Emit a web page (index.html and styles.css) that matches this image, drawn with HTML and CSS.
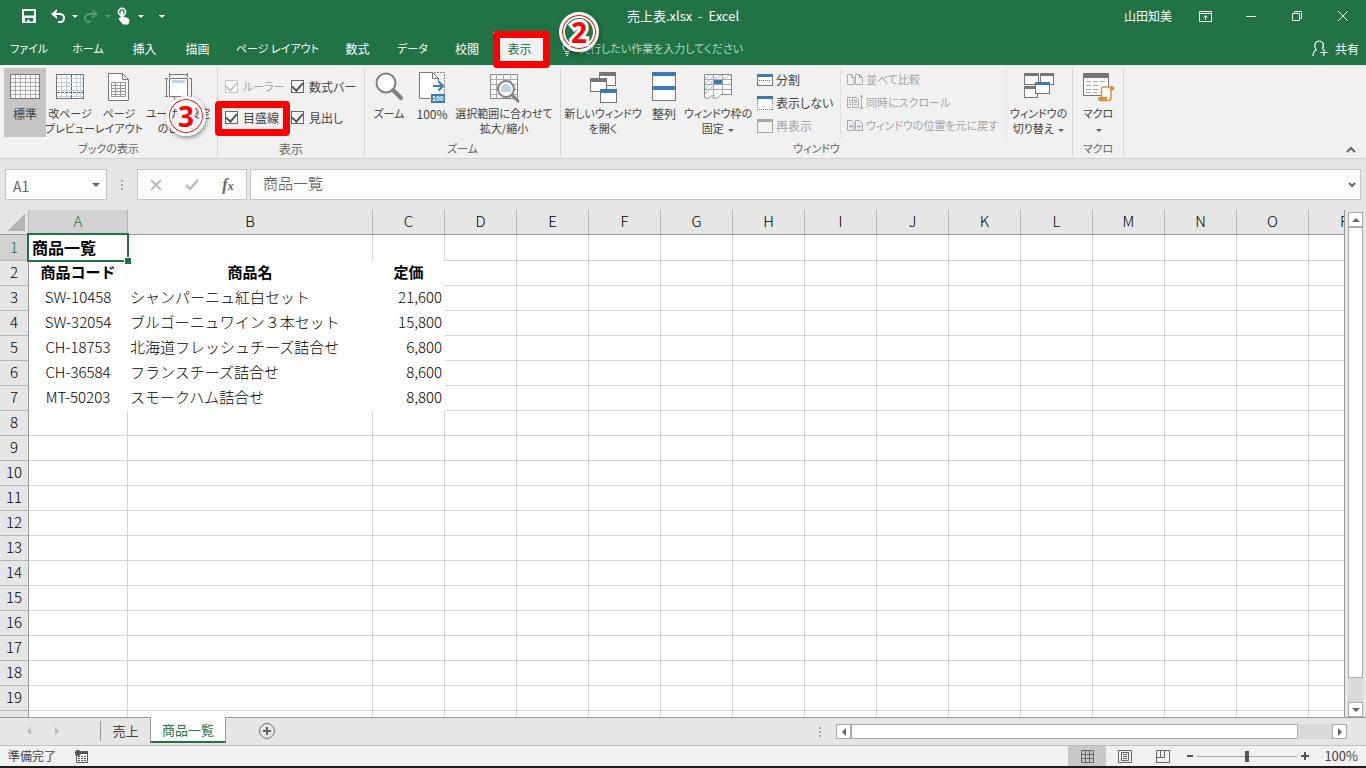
FILE: index.html
```html
<!DOCTYPE html>
<html lang="ja">

<head>
    <meta charset="UTF-8">
    <meta name="viewport" content="width=device-width, initial-scale=1.0">
    <title>売上表.xlsx - Excel</title>
    <link rel="stylesheet" href="styles.css">
</head>

<body>
    <header class="titlebar">
        <div class="quick">
            <button class="q-save" aria-label="上書き保存">
                <svg width="16" height="16" viewBox="0 0 16 16"><path d="M1 1h14v14H1z M3 3v4.500h10V3z M4 10v3.500h2.500v-2h2v2H12V10z" fill="#fff" fill-rule="evenodd" /></svg>
            </button>
            <button class="q-icon" aria-label="元に戻す">
                <svg width="16" height="16" viewBox="0 0 16 16"><path d="M1 6l6-5v3l-2 1h4c4 0 6 2 6 5s-2 5-5 5H8v-2h2c2 0 3-1 3-3s-1-3-4-3H5l2 1v3z" fill="#fff" /></svg>
            </button>
            <button class="q-caret" aria-label="元に戻すの一覧"><span class="caret"></span></button>
            <button class="q-icon dim" aria-label="やり直し">
                <svg width="16" height="16" viewBox="0 0 16 16"><path d="M15 6L9 1v3l2 1H7c-4 0-6 2-6 5s2 5 5 5h2v-2H6c-2 0-3-1-3-3s1-3 4-3h4L9 8v3z" fill="#fff" /></svg>
            </button>
            <button class="q-caret dim" aria-label="やり直しの一覧"><span class="caret"></span></button>
            <button class="q-icon" aria-label="タッチ/マウス モードの切り替え">
                <svg width="16" height="18" viewBox="0 0 16 18"><circle cx="6" cy="5" r="3.6" fill="none" stroke="#fff" stroke-width="1.6" /><path d="M5 4.500q1-1.500 2 0V10l5 1.500q1 .5 1 1.500l-1 4H7l-4-5q0-1.500 2-.5z" fill="#fff" stroke="#fff" /></svg>
            </button>
            <button class="q-caret" aria-label="モードの一覧"><span class="caret"></span></button>
            <button class="q-more" aria-label="クイック アクセス ツール バーのユーザー設定"><span class="caret lined"></span></button>
        </div>
        <div class="doc-title">売上表.xlsx&nbsp; -&nbsp; Excel</div>
        <div class="window-area">
            <span class="user">山田知美</span>
            <button aria-label="リボンの表示オプション">
                <svg width="13" height="11" viewBox="0 0 13 11"><path d="M.5 .5h12v10H.5z M.5 2.500h12 M6.500 9V4.500 M4.500 6.500l2-2 2 2" fill="none" stroke="#fff" /></svg>
            </button>
            <button aria-label="最小化">
                <svg width="10" height="10" viewBox="0 0 10 10"><path d="M0 5.500h10" stroke="#fff" /></svg>
            </button>
            <button aria-label="元のサイズに戻す">
                <svg width="10" height="10" viewBox="0 0 10 10"><path d="M.5 2.500h7v7h-7z M2.500 2.500v-2h7v7h-2" fill="none" stroke="#fff" /></svg>
            </button>
            <button aria-label="閉じる">
                <svg width="10" height="10" viewBox="0 0 10 10"><path d="M0 0l10 10M10 0L0 10" stroke="#fff" /></svg>
            </button>
        </div>
    </header>

    <nav class="tabs">
        <div class="tab-list">
            <button class="kana">ファイル</button>
            <button class="kana">ホーム</button>
            <button>挿入</button>
            <button>描画</button>
            <button class="kana">ページ レイアウト</button>
            <button>数式</button>
            <button class="kana">データ</button>
            <button>校閲</button>
            <button class="active">表示<span class="mark"></span></button>
        </div>
        <div class="tell-me">
            <svg width="10" height="14" viewBox="0 0 10 14"><path d="M3 9.500C3 8 1 7 1 4.500a4 4 0 0 1 8 0C9 7 7 8 7 9.500z M3 11.500h4M4 13.500h2" fill="none" stroke="#fff" /></svg>
            <input type="text" aria-label="操作アシスト" placeholder="実行したい作業を入力してください">
            <span class="step step-2">2</span>
        </div>
        <button class="share">
            <svg width="16" height="17" viewBox="0 0 16 17"><path d="M4 9.500C1.500 6 3 1 7 1s6 4.500 3 8 M1 16c0-4 1.500-5.500 4-6.500 M12 9v7M8.500 12.500h7" fill="none" stroke="#fff" stroke-width="1.200" /></svg>
            共有
        </button>
    </nav>

    <section class="ribbon">
        <div class="group g-views">
            <div class="group-body">
                <button class="big kanji active">
                    <svg viewBox="0 0 32 32" shape-rendering="crispEdges"><path d="M1 2h30v25H1z" fill="#fff" /><path d="M2 6.500h28M2 10.500h28M2 14.500h28M2 18.500h28M2 22.500h28M6.500 3v23M11.500 3v23M16.500 3v23M21.500 3v23M26.500 3v23" stroke="#b0b0b0" /><path d="M1.500 2.500h29v24h-29z" fill="none" stroke="#777" /></svg>
                    <span>標準</span>
                </button>
                <button class="big">
                    <svg viewBox="0 0 32 32" shape-rendering="crispEdges"><path d="M2 2h28v25H2z" fill="#fff" /><path d="M3 6.500h26M3 10.500h26M3 14.500h26M3 18.500h26M3 24.500h26M7.500 3v23M12.500 3v23M22.500 3v23M26.500 3v23" stroke="#bcd3ea" /><path d="M3 20.500h26M17.500 3v23" stroke="#666" stroke-dasharray="3 1" /><path d="M2.500 2.500h27v24h-27z" fill="none" stroke="#777" /></svg>
                    <span>改ページ<br>プレビュー</span>
                </button>
                <button class="big">
                    <svg viewBox="0 0 32 32"><path d="M5.500 1.500h14l6 6v21h-20z" fill="#fff" stroke="#777" /><path d="M19.500 1.500v6h6" fill="none" stroke="#777" /><path d="M8.500 10.500h14v14h-14z M8.500 13.500h14M8.500 16.500h14M8.500 19.500h14M8.500 22.500h14M12.500 10v15M17.500 10v15" fill="none" stroke="#999" /></svg>
                    <span>ページ<br>レイアウト</span>
                </button>
                <button class="big">
                    <svg viewBox="0 0 32 32" shape-rendering="crispEdges"><path d="M7.500 6.500h18v18h-18z" fill="#fff" stroke="#777" /><path d="M10 8h13v3H10z" fill="#bcd3ea" /><path d="M8 2.500h18M7.500 1v4M25.500 1v4M4.500 6v18M3 6.500h3M3 24.500h3M27 6.500h2.500v18H27M12.500 25v3M18.500 25v3" fill="none" stroke="#777" /></svg>
                    <span>ユーザー設定<br>のビュー</span>
                </button>
            </div>
            <div class="group-name">ブックの表示</div>
            <span class="step step-3">3</span>
        </div>

        <div class="group g-show">
            <div class="group-body checks">
                <label class="disabled"><input type="checkbox" checked disabled>ルーラー</label>
                <label><input type="checkbox" checked>数式バー</label>
                <label><input type="checkbox" checked>目盛線<span class="mark"></span></label>
                <label><input type="checkbox" checked>見出し</label>
            </div>
            <div class="group-name kanji">表示</div>
        </div>

        <div class="group g-zoom">
            <div class="group-body">
                <button class="big">
                    <svg viewBox="0 0 32 32"><circle cx="13" cy="11" r="9.500" fill="#fff" stroke="#808080" stroke-width="2" /><path d="M20 18l8 8" stroke="#808080" stroke-width="4" stroke-linecap="round" /></svg>
                    <span>ズーム</span>
                </button>
                <button class="big kanji">
                    <svg viewBox="0 0 32 32"><path d="M3.500 .5h13l6 6v20h-19z" fill="#fff" /><path d="M14 26.500H3.500V.5h13l6 6v3M16.500 .5v6h6" fill="none" stroke="#777" /><path d="M18 .5h10.500v21" fill="none" stroke="#888" stroke-dasharray="2 1" /><path d="M17 14h10M22.500 9.500l4.500 4.500-4.500 4.500" fill="none" stroke="#3e79b6" stroke-width="2" /><path d="M15 22h14v9H15z" fill="#3e79b6" /><text class="icon-100" x="16" y="29">100</text></svg>
                    <span>100%</span>
                </button>
                <button class="big">
                    <svg viewBox="0 0 32 32"><path d="M2.500 2.500h27v24h-27z" fill="#fff" stroke="#888" /><path d="M2 7.500h27M2 12.500h27M2 17.500h27M2 22.500h27M8.500 2v24M15.500 2v24M22.500 2v24" stroke="#aaa" /><circle cx="18" cy="17" r="8" fill="#fff" stroke="#808080" stroke-width="2" /><path d="M13 20v-4q2-4 5-4t5 4v4z" fill="#bcd3ea" /><path d="M24 23l6 6" stroke="#808080" stroke-width="3" stroke-linecap="round" /></svg>
                    <span>選択範囲に合わせて<br>拡大/縮小</span>
                </button>
            </div>
            <div class="group-name">ズーム</div>
        </div>

        <div class="group g-window">
            <div class="group-body">
                <button class="big">
                    <svg viewBox="0 0 32 32" shape-rendering="crispEdges"><path d="M12.500 .5h16v13h-16z" fill="#fff" stroke="#777" /><path d="M12 0h17v4H12z" fill="#777" /><path d="M3.500 6.500h16v13h-16z" fill="#fff" stroke="#777" /><path d="M3 6h17v4H3z" fill="#777" /><path d="M13.500 17.500h16v13h-16z" fill="#fff" stroke="#777" /><path d="M13 17h17v4H13z" fill="#3e79b6" /></svg>
                    <span>新しいウィンドウ<br>を開く</span>
                </button>
                <button class="big kanji">
                    <svg viewBox="0 0 32 32" shape-rendering="crispEdges"><path d="M4.500 .5h23v28h-23z" fill="#fff" stroke="#777" /><path d="M4 0h24v4H4zM4 14h24v4H4z" fill="#3e79b6" /></svg>
                    <span>整列</span>
                </button>
                <button class="big">
                    <svg viewBox="0 0 32 32"><path d="M2.500 2.500h27v20h-27z" fill="#fff" stroke="#888" /><path d="M3 7.500h26M3 12.500h26M3 17.500h26M11.500 3v19M20.500 3v19" stroke="#aaa" /><path d="M3 7l5-4M3 12l9-9M12 7l8-4M3 17l9-9M21 7l8-4M3 22l8-8" stroke="#9dbfe2" /><path d="M12 8h8v4h-8z" fill="#3e79b6" /><path d="M2.500 22v4h5l3-3h2l-2 3h5l4-4" fill="#fff" stroke="#999" /></svg>
                    <span>ウィンドウ枠の<br>固定 <i class="caret"></i></span>
                </button>
                <div class="small-list">
                    <button>
                        <svg width="16" height="14" viewBox="0 0 16 14" shape-rendering="crispEdges"><path d="M.5 1.500h15v11H.5z" fill="#fff" stroke="#777" /><path d="M0 1h16v3H0z" fill="#3e79b6" /><path d="M2 7.500h12" stroke="#3e79b6" stroke-dasharray="1 1" /></svg>
                        分割
                    </button>
                    <button>
                        <svg width="16" height="14" viewBox="0 0 16 14" shape-rendering="crispEdges"><path d="M.5 1.500h15v12H.5z" fill="#fff" stroke="#777" stroke-dasharray="1 1" /><path d="M0 0h16v3H0z" fill="#3e79b6" /></svg>
                        表示しない
                    </button>
                    <button disabled>
                        <svg width="16" height="14" viewBox="0 0 16 14" shape-rendering="crispEdges"><path d="M.5 .5h15v13H.5z" fill="#f3f3f3" stroke="#a6a6a6" /><path d="M0 0h16v3H0z" fill="#a6a6a6" /></svg>
                        再表示
                    </button>
                </div>
                <div class="small-list compare">
                    <button disabled>
                        <svg width="16" height="13" viewBox="0 0 16 13"><path d="M.5 1.500h4l2.500 3v7H.5z M8.500 1.500h4l3 3v7h-7z M4.500 1.500v3H7 M12.500 1.500v3h3" fill="none" stroke="#b0a8b0" /></svg>
                        並べて比較
                    </button>
                    <button disabled>
                        <svg width="16" height="15" viewBox="0 0 16 15"><path d="M4 2.500H.5v10H4M5.500 2.500h4l2 2v8h-6z M2 5.500h2M2 7.500h2M2 9.500h2M7 5.500h3M7 7.500h3M7 9.500h3 M14.500 0v14M13 2l1.500-2L16 2M13 12l1.500 2 1.500-2" fill="none" stroke="#aaa" /></svg>
                        同時にスクロール
                    </button>
                    <button disabled>
                        <svg width="16" height="13" viewBox="0 0 16 13"><path d="M.5 1.500h4l2.500 3v7H.5z M8.500 1.500h4l3 3v7h-7z M2 7.500h4M10 7.500h4M4 5.500v4M12 5.500v4" fill="none" stroke="#aaa4b4" /></svg>
                        ウィンドウの位置を元に戻す
                    </button>
                </div>
                <button class="big">
                    <svg viewBox="0 0 32 32" shape-rendering="crispEdges"><path d="M1.500 1.500h14v11h-14zM17.500 1.500h13v11h-13zM1.500 14.500h13v11h-13z" fill="#fff" stroke="#777" /><path d="M1 1h15v3H1zM17 1h14v3H17zM1 14h14v3H1z" fill="#777" /><path d="M12.500 10.500h14v11h-14z" fill="#fff" stroke="#777" /><path d="M12 10h15v3H12z" fill="#3e79b6" /></svg>
                    <span>ウィンドウの<br>切り替え <i class="caret"></i></span>
                </button>
            </div>
            <div class="group-name">ウィンドウ</div>
        </div>

        <div class="group g-macro">
            <div class="group-body">
                <button class="big">
                    <svg viewBox="0 0 32 32"><path d="M1.500 1.500h25v22h-25z" fill="#fff" stroke="#777" /><path d="M1 1h26v5H1z" fill="#777" /><path d="M4 9.500h5M11 9.500h5M18 9.500h5M4 13.500h5M11 13.500h5M4 17.500h5M11 17.500h5M4 20.500h5M11 20.500h4" stroke="#aaa" /><path d="M19.500 16.500q0-1.500 2-1.500h9q1 0 1 2.500h-2.500v8q0 3-2.500 3h-8q-1.500 0-1.500-2.500h2.500z" fill="#fff" stroke="#e88c3a" stroke-width="1.500" /><path d="M17 25h8v3h-8z M28 15h3v3h-3z" fill="#e88c3a" /></svg>
                    <span>マクロ<br><i class="caret"></i></span>
                </button>
            </div>
            <div class="group-name">マクロ</div>
        </div>

        <button class="collapse" aria-label="リボンを折りたたむ">
            <svg width="10" height="7" viewBox="0 0 10 7"><path d="M1 6l4-4 4 4" fill="none" stroke="#666" stroke-width="2" /></svg>
        </button>
    </section>

    <section class="formula-row">
        <div class="name-box">
            <input type="text" aria-label="名前ボックス" value="A1">
            <button aria-label="名前の一覧"><span class="caret wide"></span></button>
        </div>
        <div class="dots"><i></i><i></i><i></i></div>
        <div class="formula-buttons">
            <button aria-label="キャンセル"><svg width="12" height="12" viewBox="0 0 12 12"><path d="M1 1l10 10M11 1L1 11" stroke="#bbb" stroke-width="2" /></svg></button>
            <button aria-label="入力"><svg width="14" height="12" viewBox="0 0 14 12"><path d="M1 6l4 4 8-9" fill="none" stroke="#bbb" stroke-width="2.500" /></svg></button>
            <button class="fx" aria-label="関数の挿入">f<small>x</small></button>
        </div>
        <div class="formula">
            <input type="text" aria-label="数式バー" value="商品一覧">
            <button aria-label="数式バーの展開"><svg width="8" height="6" viewBox="0 0 8 6"><path d="M1 1l3 3 3-3" fill="none" stroke="#666" stroke-width="2" /></svg></button>
        </div>
    </section>

    <main class="sheet">
        <div class="grid" id="grid">
            <table>
                <thead>
                    <tr id="columns">
                        <th class="corner"></th>
                        <th class="col-a selected">A</th>
                        <th class="col-b">B</th>
                        <th class="col">C</th>
                    </tr>
                </thead>
                <tbody id="rows">
                    <tr class="first">
                        <th class="selected">1</th>
                        <td class="heading current">商品一覧</td>
                        <td></td>
                        <td></td>
                    </tr>
                    <tr class="data names">
                        <th>2</th>
                        <td>商品コード</td>
                        <td>商品名</td>
                        <td>定価</td>
                    </tr>
                    <tr class="data">
                        <th>3</th>
                        <td>SW-10458</td>
                        <td>シャンパーニュ紅白セット</td>
                        <td>21,600</td>
                    </tr>
                    <tr class="data">
                        <th>4</th>
                        <td>SW-32054</td>
                        <td>ブルゴーニュワイン３本セット</td>
                        <td>15,800</td>
                    </tr>
                    <tr class="data">
                        <th>5</th>
                        <td>CH-18753</td>
                        <td>北海道フレッシュチーズ詰合せ</td>
                        <td>6,800</td>
                    </tr>
                    <tr class="data">
                        <th>6</th>
                        <td>CH-36584</td>
                        <td>フランスチーズ詰合せ</td>
                        <td>8,600</td>
                    </tr>
                    <tr class="data">
                        <th>7</th>
                        <td>MT-50203</td>
                        <td>スモークハム詰合せ</td>
                        <td>8,800</td>
                    </tr>
                </tbody>
            </table>
        </div>
        <div class="v-scroll">
            <button aria-label="上へ"><span class="arrow up"></span></button>
            <div class="track"><div class="thumb"></div></div>
            <button aria-label="下へ"><span class="arrow down"></span></button>
        </div>
    </main>

    <section class="sheet-bar">
        <div class="sheet-nav">
            <button aria-label="前のシート"><span class="arrow left"></span></button>
            <button aria-label="次のシート"><span class="arrow right"></span></button>
        </div>
        <button class="sheet-tab">売上</button>
        <button class="sheet-tab active">商品一覧</button>
        <button class="add-sheet" aria-label="新しいシート">
            <svg width="18" height="18" viewBox="0 0 18 18"><circle cx="9" cy="9" r="7.500" fill="none" stroke="#777" /><path d="M9 5v8M5 9h8" stroke="#666" stroke-width="2" /></svg>
        </button>
        <div class="dots"><i></i><i></i><i></i></div>
        <div class="h-scroll">
            <button aria-label="左へ"><span class="arrow left"></span></button>
            <div class="track"><div class="thumb"></div></div>
            <button aria-label="右へ"><span class="arrow right"></span></button>
        </div>
    </section>

    <footer class="status">
        <span>準備完了</span>
        <svg class="record" width="14" height="13" viewBox="0 0 14 13"><path d="M1.500 5v7.500h11v-10H7" fill="#fff" stroke="#555" /><path d="M6 1h7v3H6z" fill="#555" /><circle cx="3" cy="3" r="3" fill="#555" /><path d="M3 6.500h8M3 8.500h8M3 10.500h8" stroke="#555" stroke-dasharray="2 1" /></svg>
        <div class="view-buttons">
            <button class="active" aria-label="標準"><svg width="13" height="13" viewBox="0 0 13 13"><path d="M.5 .5h12v12H.5zM.5 4.500h12M.5 8.500h12M4.500 .5v12M8.500 .5v12" fill="none" stroke="#666" /></svg></button>
            <button aria-label="ページ レイアウト"><svg width="14" height="13" viewBox="0 0 14 13"><path d="M.5 .5h13v12H.5zM3.500 2.500h7v8h-7zM5 4.500h4M5 6.500h4M5 8.500h4" fill="none" stroke="#666" /></svg></button>
            <button aria-label="改ページ プレビュー"><svg width="14" height="13" viewBox="0 0 14 13"><path d="M.5 .5h13v12H.5zM.5 7.500h8v-7M4.500 .5v7" fill="none" stroke="#666" /></svg></button>
        </div>
        <div class="zoom">
            <button aria-label="縮小"><svg width="8" height="8" viewBox="0 0 8 8"><path d="M1 4h6" stroke="#555" stroke-width="2" /></svg></button>
            <input type="range" aria-label="ズーム" min="0" max="200" value="100">
            <button aria-label="拡大"><svg width="8" height="8" viewBox="0 0 8 8"><path d="M0 4h8M4 0v8" stroke="#555" stroke-width="2" /></svg></button>
            <span class="percent">100%</span>
        </div>
    </footer>

    <script>
        const grid = document.getElementById('grid');
        const columns = document.getElementById('columns');
        const rows = document.getElementById('rows');

        // ウィンドウに見える分だけ列と行を追加する
        const extraColumns = Math.ceil((grid.clientWidth - 445) / 72);
        const lastRow = Math.ceil((grid.clientHeight - 26) / 25);

        for (let i = 0; i < extraColumns; i++) {
            const n = i + 3;
            const th = document.createElement('th');
            th.className = 'col';
            th.textContent = (n > 25 ? 'A' : '') + String.fromCharCode(65 + n % 26);
            columns.appendChild(th);
        }

        for (let n = 8; n <= lastRow; n++) {
            const tr = document.createElement('tr');
            tr.innerHTML = '<th>' + n + '</th><td></td><td></td><td></td>';
            rows.appendChild(tr);
        }

        for (const tr of rows.children) {
            for (let i = 0; i < extraColumns; i++) {
                tr.appendChild(document.createElement('td'));
            }
        }
    </script>
</body>

</html>
```
FILE: styles.css
```css
* {
    margin: 0;
    padding: 0;
    box-sizing: border-box;
}

body {
    font-family: "Noto Sans CJK JP", sans-serif;
    font-size: 12px;
    line-height: 15px;
    color: #444;
    background: #e6e6e6;
    height: 100vh;
    display: flex;
    flex-direction: column;
    overflow: hidden;
    border-bottom: 2px solid #1c1c1c;
}

button,
input {
    font: inherit;
    color: inherit;
    background: none;
    border: none;
    outline: none;
    min-width: 0;
}

button {
    display: flex;
    align-items: center;
    justify-content: center;
    white-space: nowrap;
    font-feature-settings: "palt";
}

svg {
    flex: none;
}

.caret {
    display: inline-block;
    border: 3px solid transparent;
    border-top-color: currentColor;
    border-bottom: none;
    vertical-align: middle;
}

.caret.wide {
    border-width: 4px 4px 0;
}

.caret.lined {
    position: relative;
}

.caret.lined::before {
    content: '';
    position: absolute;
    left: -3px;
    top: -3px;
    width: 6px;
    height: 1px;
    background: currentColor;
}

/* Title bar */
.titlebar {
    flex: none;
    height: 32px;
    background: #217346;
    color: #fff;
    display: grid;
    grid-template-columns: 1fr auto 1fr;
    align-items: center;
}

.quick {
    display: flex;
    align-items: center;
    padding-left: 21px;
}

.q-save {
    width: 16px;
    margin-right: 13px;
}

.q-icon {
    width: 16px;
}

.q-caret {
    width: 17px;
    height: 16px;
}

.q-more {
    width: 26px;
    height: 16px;
}

.dim {
    opacity: 0.25;
}

.doc-title {
    font-size: 13px;
    padding-bottom: 2px;
}

.window-area {
    display: flex;
    justify-content: flex-end;
    align-items: center;
}

.window-area button {
    width: 46px;
    height: 32px;
}

.user {
    margin-right: 10px;
    padding-bottom: 2px;
}

/* Tabs */
.tabs {
    flex: none;
    height: 33px;
    background: #217346;
    color: #fff;
    display: flex;
    align-items: stretch;
}

.tab-list {
    display: grid;
    grid-template-columns: 58px 60px 53px 53px 107px 53px 57px 52px 53px;
}

.tab-list .kana {
    font-size: 11px;
}

.tab-list .active {
    position: relative;
    background: #f1f1f1;
    color: #217346;
}

.mark {
    position: absolute;
    border: 7px solid #f00;
    border-radius: 4px;
}

.tab-list .mark {
    inset: -1px -4px -3px 0;
}

.tell-me {
    position: relative;
    flex: 1;
    display: flex;
    align-items: center;
    gap: 7px;
    padding-left: 16px;
}

.tell-me input {
    flex: 1;
    font-size: 11px;
    font-feature-settings: "palt";
}

.tell-me input::placeholder {
    color: #b5d3c2;
    opacity: 1;
}

.share {
    gap: 7px;
    padding-right: 7px;
}

.step {
    position: absolute;
    z-index: 2;
    width: 40px;
    height: 40px;
    border-radius: 50%;
    border: 3px solid #fff;
    box-shadow: 1px 2px 4px rgba(0, 0, 0, 0.4), inset 0 0 0 1px #f00, inset 0 0 0 3px #fff;
    color: #f00;
    font: bold 28px "Open Sans", sans-serif;
    line-height: 34px;
    text-align: center;
    -webkit-text-stroke: 6px #fff;
    paint-order: stroke fill;
}

.step-2 {
    left: 13px;
    top: -20px;
}

.step-3 {
    left: 166px;
    top: 28px;
}

/* Ribbon */
.ribbon {
    flex: none;
    height: 94px;
    background: #f1f1f1;
    border-bottom: 1px solid #d0d0d0;
    display: flex;
    padding: 3px 0 2px;
    font-size: 11px;
}

.group {
    position: relative;
    display: flex;
    flex-direction: column;
    border-right: 1px solid #d5d5d5;
}

.group-body {
    flex: 1;
    display: flex;
    align-items: flex-start;
}

.group-name {
    height: 15px;
    text-align: center;
    color: #666;
    font-feature-settings: "palt";
}

.kanji {
    font-size: 12px;
}

.g-views {
    width: 218px;
}

.g-views .group-body {
    display: grid;
    grid-template-columns: 42px 48px 50px 68px;
    padding-left: 4px;
}

.g-zoom {
    width: 196px;
}

.g-zoom .group-body {
    display: grid;
    grid-template-columns: 42px 44px 100px;
    padding-left: 3px;
}

.g-window {
    width: 512px;
}

.g-window .group-body {
    display: grid;
    grid-template-columns: 80px 42px 66px 90px 166px 63px;
    padding-left: 2px;
}

.g-macro {
    width: 51px;
}

.g-macro .group-body {
    justify-content: center;
}

.big {
    flex-direction: column;
    justify-content: flex-start;
    gap: 2px;
    height: 69px;
    padding-top: 4px;
}

.big svg {
    width: 32px;
    height: 32px;
}

.big.active {
    background: #c5c5c5;
}

.big .caret {
    color: #666;
    margin-left: 2px;
}

.icon-100 {
    font: bold 7px "Liberation Sans", sans-serif;
    fill: #fff;
}

.g-show {
    width: 147px;
}

.checks {
    display: grid;
    grid-template-columns: 66px 74px;
    grid-template-rows: 31px 31px;
    padding: 3px 0 0 7px;
    font-size: 12px;
}

.checks label {
    position: relative;
    height: 31px;
    display: flex;
    align-items: center;
    gap: 5px;
    white-space: nowrap;
    font-feature-settings: "palt";
}

.checks .mark {
    inset: -1px 1px -3px -10px;
}

.checks input {
    appearance: none;
    flex: none;
    width: 13px;
    height: 13px;
    border: 1px solid #666;
    background: #fff;
    display: grid;
    place-items: center;
}

.checks input:checked::before {
    content: '';
    width: 9px;
    height: 5px;
    border: solid #555;
    border-width: 0 0 2px 2px;
    transform: translateY(-1px) rotate(-48deg);
}

.checks .disabled {
    color: #a6a6a6;
    font-size: 11px;
}

.checks .disabled input {
    border-color: #c6c6c6;
}

.checks .disabled input::before {
    border-color: #c6c6c6;
}

.small-list {
    display: flex;
    flex-direction: column;
    padding-left: 6px;
    border-right: 1px solid #e0e0e0;
    font-size: 12px;
}

.small-list.compare {
    font-size: 11px;
}

.small-list button {
    height: 23px;
    gap: 3px;
    justify-content: flex-start;
}

.small-list button:disabled {
    color: #a6a6a6;
}

.collapse {
    align-self: flex-end;
    margin-left: auto;
    padding: 0 10px 3px 0;
}

/* Formula bar */
.formula-row {
    flex: none;
    display: flex;
    padding: 10px 5px;
    height: 51px;
    font-size: 15px;
}

.name-box,
.formula-buttons,
.formula {
    background: #fdfdfd;
    border: 1px solid #c6c6c6;
    display: flex;
    align-items: center;
    color: #666;
}

.name-box {
    width: 102px;
}

.name-box input {
    flex: 1;
    padding: 3px 0 0 7px;
    font-size: 14px;
}

.name-box button {
    width: 20px;
}

.dots {
    width: 30px;
    display: flex;
    flex-direction: column;
    align-items: center;
    justify-content: center;
    gap: 2px;
}

.dots i {
    width: 2px;
    height: 2px;
    background: #aaa;
}

.formula-buttons {
    width: 110px;
    margin-right: 3px;
}

.formula-buttons button {
    flex: 1;
}

.fx {
    font: italic bold 16px "Liberation Serif", serif;
}

.fx small {
    font-size: 12px;
    padding-top: 4px;
}

.formula {
    flex: 1;
    color: #444;
}

.formula input {
    flex: 1;
    padding: 0 0 4px 12px;
    font-weight: 300;
}

.formula button {
    width: 16px;
}

/* Sheet */
.sheet {
    flex: 1;
    min-height: 0;
    display: flex;
}

.grid {
    flex: 1;
    min-width: 0;
    overflow: hidden;
    border-right: 1px solid #999;
}

table {
    table-layout: fixed;
    width: 0;
    border-collapse: separate;
    border-spacing: 0;
    background: #fff;
    color: #000;
    font-size: 15px;
    line-height: 22px;
}

th {
    font-weight: 300;
    background: #e6e6e6;
    border-right: 1px solid #b5b5b5;
    border-bottom: 1px solid #b5b5b5;
    padding-bottom: 2px;
}

thead th {
    height: 25px;
    border-bottom-color: #999;
}

tbody th {
    border-right-color: #999;
}

.corner {
    width: 29px;
    background: linear-gradient(135deg, #e6e6e6 50%, #b5b5b5 50%) 8px 4px / 17px 17px no-repeat #e6e6e6;
}

.col-a {
    width: 99px;
}

.col-b {
    width: 245px;
}

.col {
    width: 72px;
}

th.selected {
    background: #d2d2d2;
    color: #217346;
}

td {
    height: 25px;
    padding: 0 2px 2px;
    border-right: 1px solid #d4d4d4;
    border-bottom: 1px solid #d4d4d4;
    white-space: nowrap;
    font-weight: 300;
}

.first td {
    height: 26px;
}

.first td:nth-child(-n+4) {
    border-bottom-color: #fff;
}

.heading {
    position: relative;
    padding-left: 3px;
    font-size: 16px;
    font-weight: bold;
}

.current::before {
    content: '';
    position: absolute;
    inset: -2px;
    border: 2px solid #217346;
}

.current::after {
    content: '';
    position: absolute;
    right: -4px;
    bottom: -4px;
    width: 6px;
    height: 6px;
    background: #217346;
    border: solid #fff;
    border-width: 1px 0 0 1px;
}

.data td:nth-child(-n+4) {
    border-color: #fff;
}

.data td:nth-child(2) {
    text-align: center;
}

.data td:nth-child(4) {
    text-align: right;
}

.data.names td {
    text-align: center;
    font-weight: bold;
}

/* Scroll bars */
.arrow {
    border: 4px solid transparent;
}

.arrow.up {
    border-bottom-color: #666;
    border-top: none;
}

.arrow.down {
    border-top-color: #666;
    border-bottom: none;
}

.arrow.left {
    border-right-color: #666;
    border-left: none;
}

.arrow.right {
    border-left-color: #666;
    border-right: none;
}

.v-scroll {
    width: 21px;
    padding: 2px 3px 0;
    display: flex;
    flex-direction: column;
}

.v-scroll button,
.h-scroll button {
    width: 15px;
    height: 15px;
    background: #fff;
    border: 1px solid #aaa;
}

.track {
    flex: 1;
    background: #dadada;
}

.thumb {
    background: #fff;
    border: 1px solid #aaa;
}

.v-scroll .thumb {
    height: 95%;
}

.h-scroll .thumb {
    width: 93%;
    height: 15px;
}

/* Sheet tabs */
.sheet-bar {
    flex: none;
    height: 29px;
    display: flex;
    border-top: 1px solid #999;
    border-bottom: 1px solid #c0c0c0;
    font-size: 13px;
}

.sheet-nav {
    width: 101px;
    height: 20px;
    margin-top: 3px;
    padding: 0 28px 0 15px;
    display: flex;
    border-right: 1px solid #999;
}

.sheet-nav button {
    width: 28px;
    opacity: 0.35;
}

.sheet-tab {
    width: 49px;
    height: 24px;
}

.sheet-tab.active {
    width: 76px;
    margin-top: -1px;
    height: 26px;
    background: #fff;
    border: 1px solid #999;
    border-top: none;
    border-bottom: 2px solid #217346;
    color: #217346;
}

.add-sheet {
    width: 82px;
    height: 26px;
}

.sheet-bar .dots {
    margin-left: auto;
    width: 32px;
}

.h-scroll {
    width: 511px;
    margin: 6px 19px 0 0;
    display: flex;
    height: 15px;
}

/* Status bar */
.status {
    flex: none;
    height: 20px;
    background: #f1f1f1;
    display: flex;
    align-items: center;
    padding-left: 8px;
}

.status span {
    padding-bottom: 2px;
}

.record {
    margin-left: 19px;
}

.view-buttons {
    margin-left: auto;
    display: flex;
}

.view-buttons button {
    width: 38px;
    height: 20px;
}

.view-buttons .active {
    background: #c8c8c8;
}

.zoom {
    display: flex;
    align-items: center;
    padding-left: 4px;
}

.zoom button {
    width: 8px;
    height: 20px;
}

.zoom input {
    appearance: none;
    width: 100px;
    height: 12px;
    margin: 0 4px 0 3px;
    background: linear-gradient(#aaa, #aaa) center / 100% 1px no-repeat;
}

.zoom input::-webkit-slider-thumb {
    appearance: none;
    width: 4px;
    height: 11px;
    background: #555;
}

.zoom .percent {
    width: 57px;
    padding-right: 8px;
    text-align: right;
    font-size: 13px;
}
```
